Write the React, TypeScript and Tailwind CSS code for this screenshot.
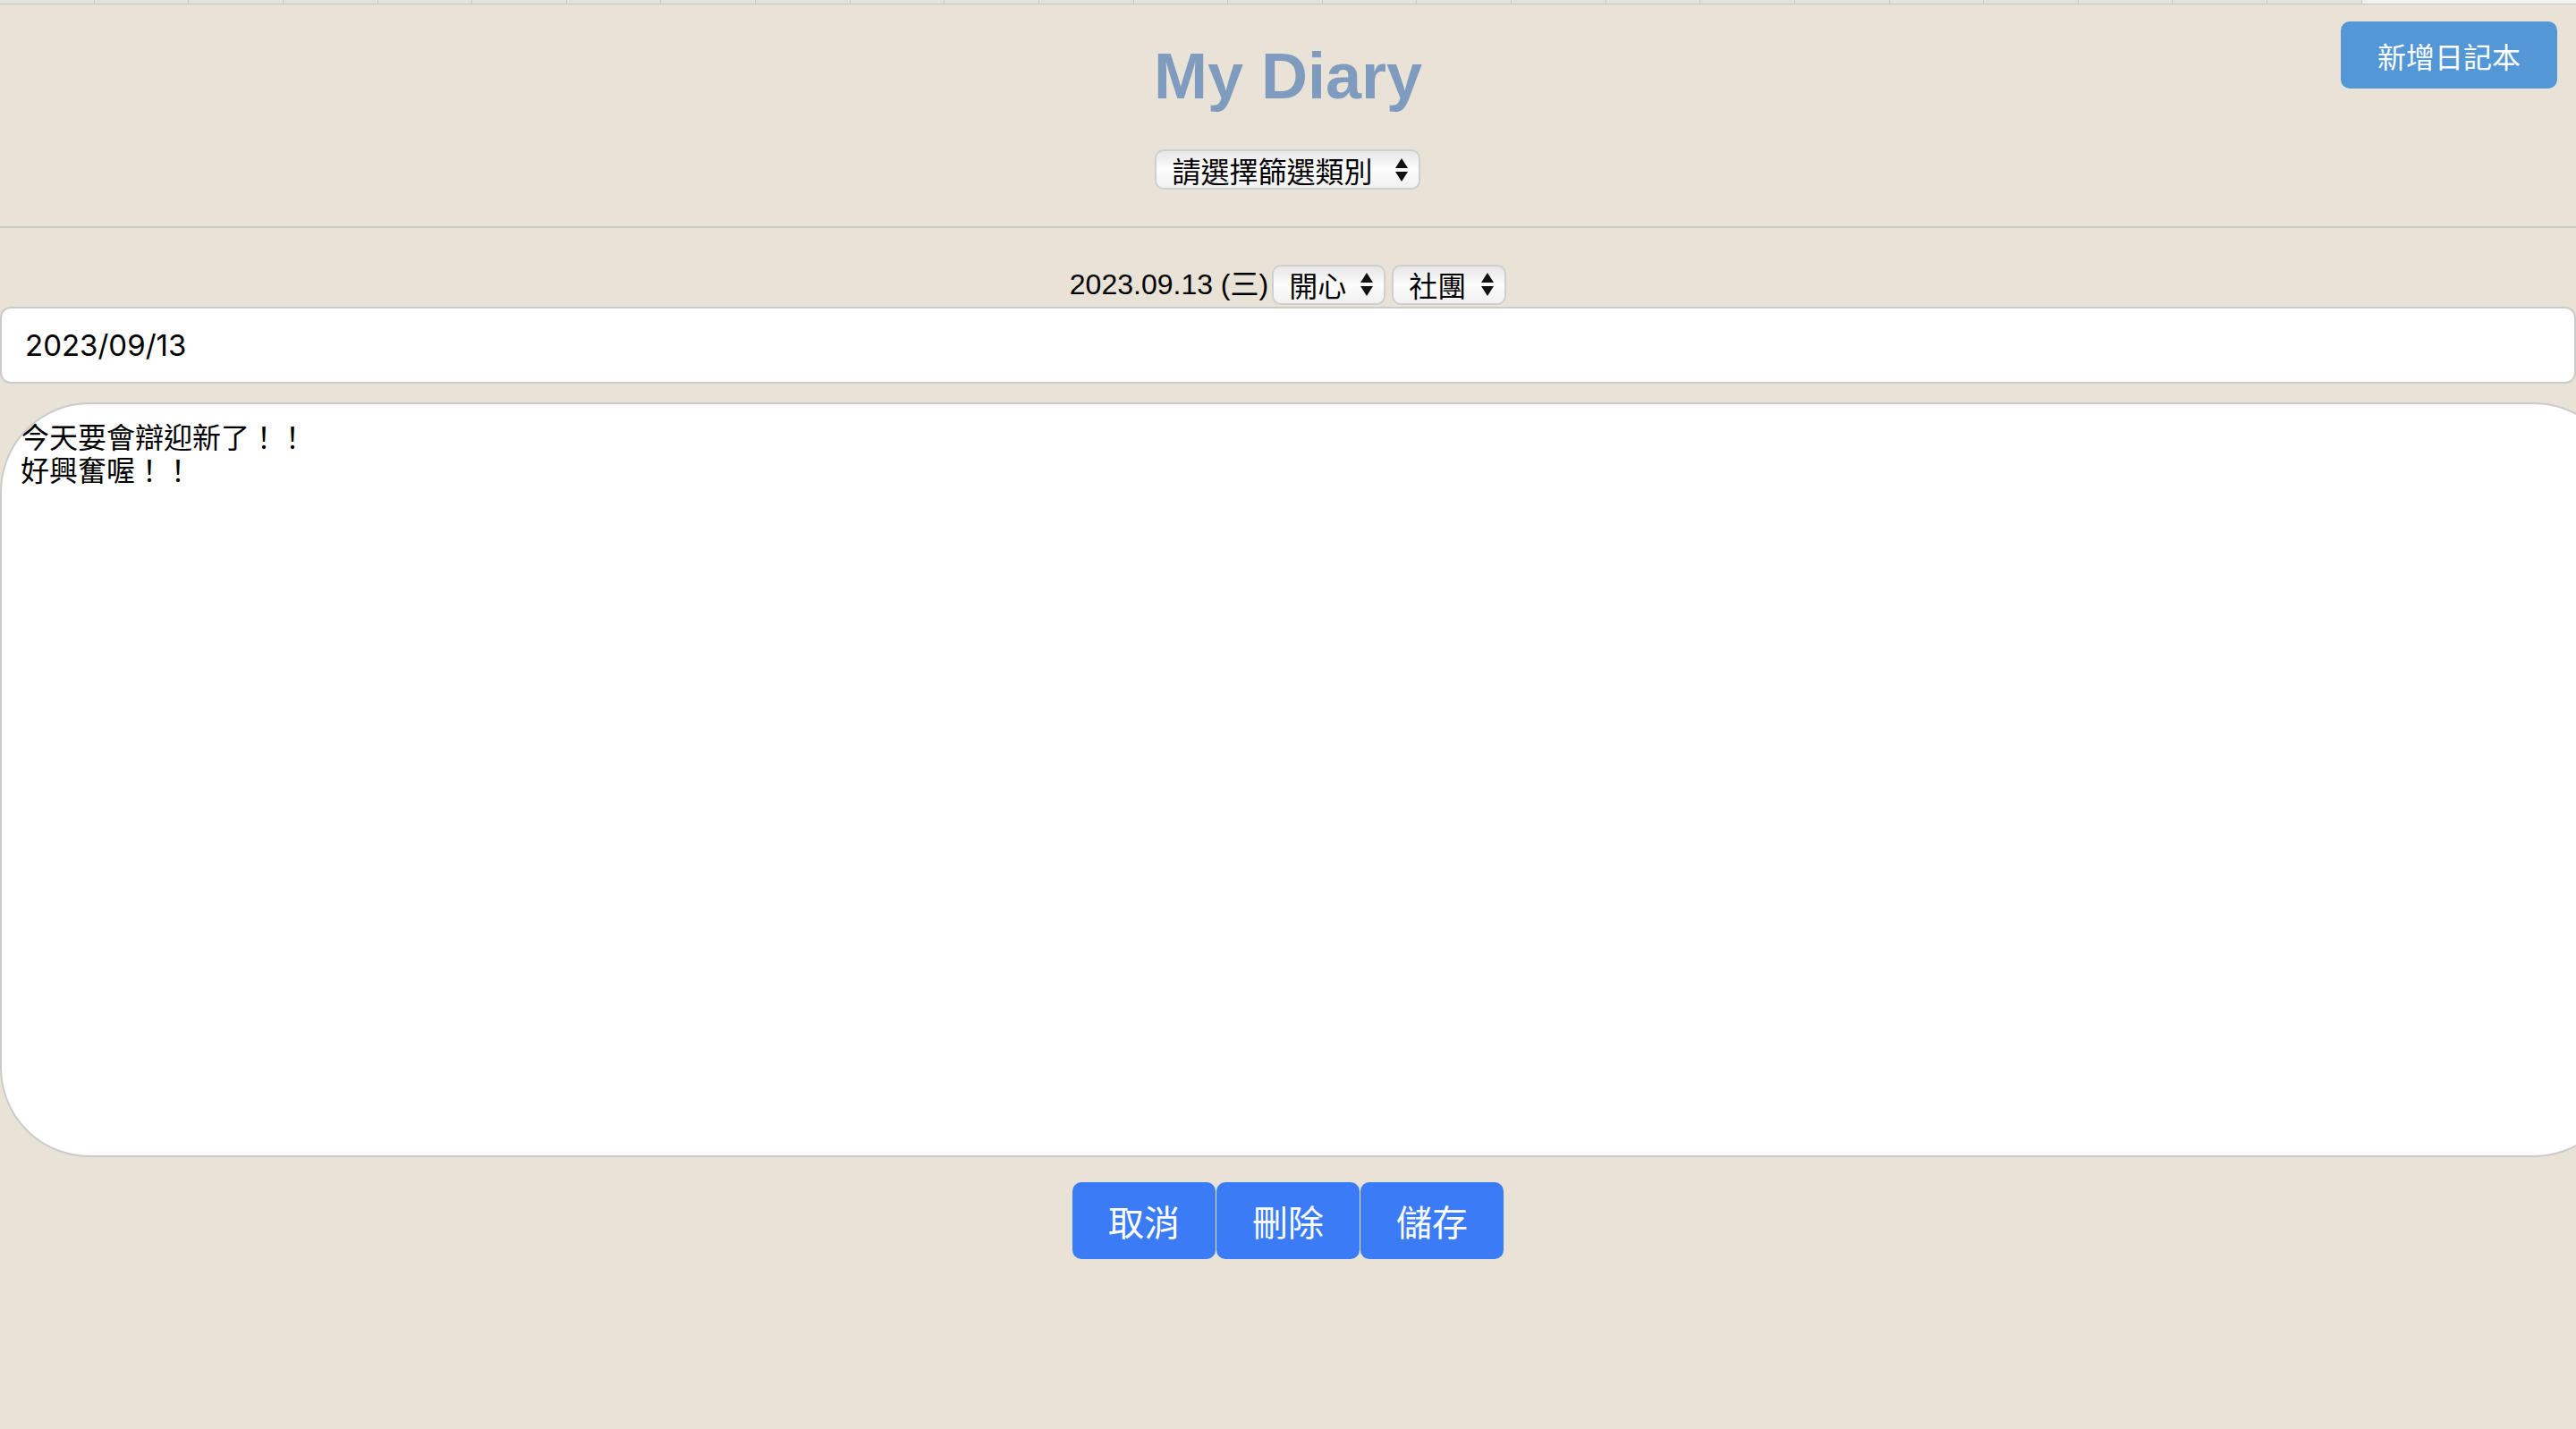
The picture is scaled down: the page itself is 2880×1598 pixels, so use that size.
import React from "react";

const cjk = "font-['Noto_Sans_CJK_TC','Noto_Sans',sans-serif]";
const latin = "font-['Liberation_Sans','Noto_Sans_CJK_TC',sans-serif]";

const Arrows: React.FC = () => (
  <svg width="16" height="30" viewBox="0 0 16 30" className="shrink-0">
    <polygon points="8,2 15,13 1,13" fill="#111" />
    <polygon points="1,17 15,17 8,28" fill="#111" />
  </svg>
);

type SelectProps = {
  label: string;
  width: string;
};

const FakeSelect: React.FC<SelectProps> = ({ label, width }) => (
  <div
    className={`${width} h-[45px] flex items-center justify-between pl-[17px] pr-[11px] rounded-[10px] border-2 border-[#cfcfcf] bg-linear-to-b from-[#e6e6e6] via-[#fdfdfd] to-[#f0f0f0] text-[32px] leading-none text-black ${cjk}`}
  >
    <span>{label}</span>
    <Arrows />
  </div>
);

const App: React.FC = () => {
  const cells = Array.from({ length: 25 });

  return (
    <div className="min-h-screen w-full overflow-hidden bg-[#e8e2d7]">
      {/* top strip */}
      <div className="flex h-[5px] border-b border-[#c6c6bf]">
        {cells.map((_, i) => (
          <div key={i} className="w-[105.64px] h-full bg-[#e2e4e0] border-r border-[#cacbc7]" />
        ))}
        <div className="flex-1 bg-[#f2f3f0]" />
      </div>

      {/* header */}
      <div className="grid grid-cols-[1fr_auto_1fr]">
        <div />
        <div className="flex flex-col items-center">
          <h1 className={`mt-[39px] text-[72px] leading-[83px] font-bold text-[#7f9cbf] ${latin}`}>My Diary</h1>
          <div className="mt-[40px] mb-[41px]">
            <FakeSelect label="請選擇篩選類別" width="w-[297px]" />
          </div>
        </div>
        <div className="flex justify-end items-start pt-[19px] pr-[21px]">
          <button
            className={`w-[242px] h-[75px] rounded-[10px] bg-[#5397d6] text-white text-[32px] ${cjk}`}
          >
            新增日記本
          </button>
        </div>
      </div>

      <div className="h-[2px] bg-[#cdcbc6]" />

      {/* date row */}
      <div className="mt-[39px] flex items-center justify-center">
        <span className={`text-[32px] text-black ${latin}`}>2023.09.13 (三)</span>
        <div className="ml-[4px]">
          <FakeSelect label="開心" width="w-[127px]" />
        </div>
        <div className="ml-[7px]">
          <FakeSelect label="社團" width="w-[128px]" />
        </div>
      </div>

      {/* date input */}
      <div className="mt-[1px]">
        <input
          type="text"
          readOnly
          value="2023/09/13"
          className="w-full h-[86px] rounded-[12px] border-2 border-[#cbcbcb] bg-white pl-[26px] text-[33px] text-black outline-none font-['Inter','Noto_Sans_CJK_TC',sans-serif]"
        />
      </div>

      {/* content */}
      <textarea
        readOnly
        value={"今天要會辯迎新了！！\n好興奮喔！！"}
        className={`mt-[21px] block w-[2933px] h-[844px] resize-none rounded-[100px] border-2 border-[#cbcbcb] bg-white pl-[21px] pt-[17px] text-[32px] leading-[37px] text-black outline-none ${cjk}`}
      />

      {/* actions */}
      <div className="mt-[28px] flex justify-center gap-[1px]">
        {["取消", "刪除", "儲存"].map((t) => (
          <button
            key={t}
            className={`w-[160px] h-[86px] rounded-[10px] bg-[#3b7cf6] text-white text-[40px] ${cjk}`}
          >
            {t}
          </button>
        ))}
      </div>
    </div>
  );
};

export default App;
